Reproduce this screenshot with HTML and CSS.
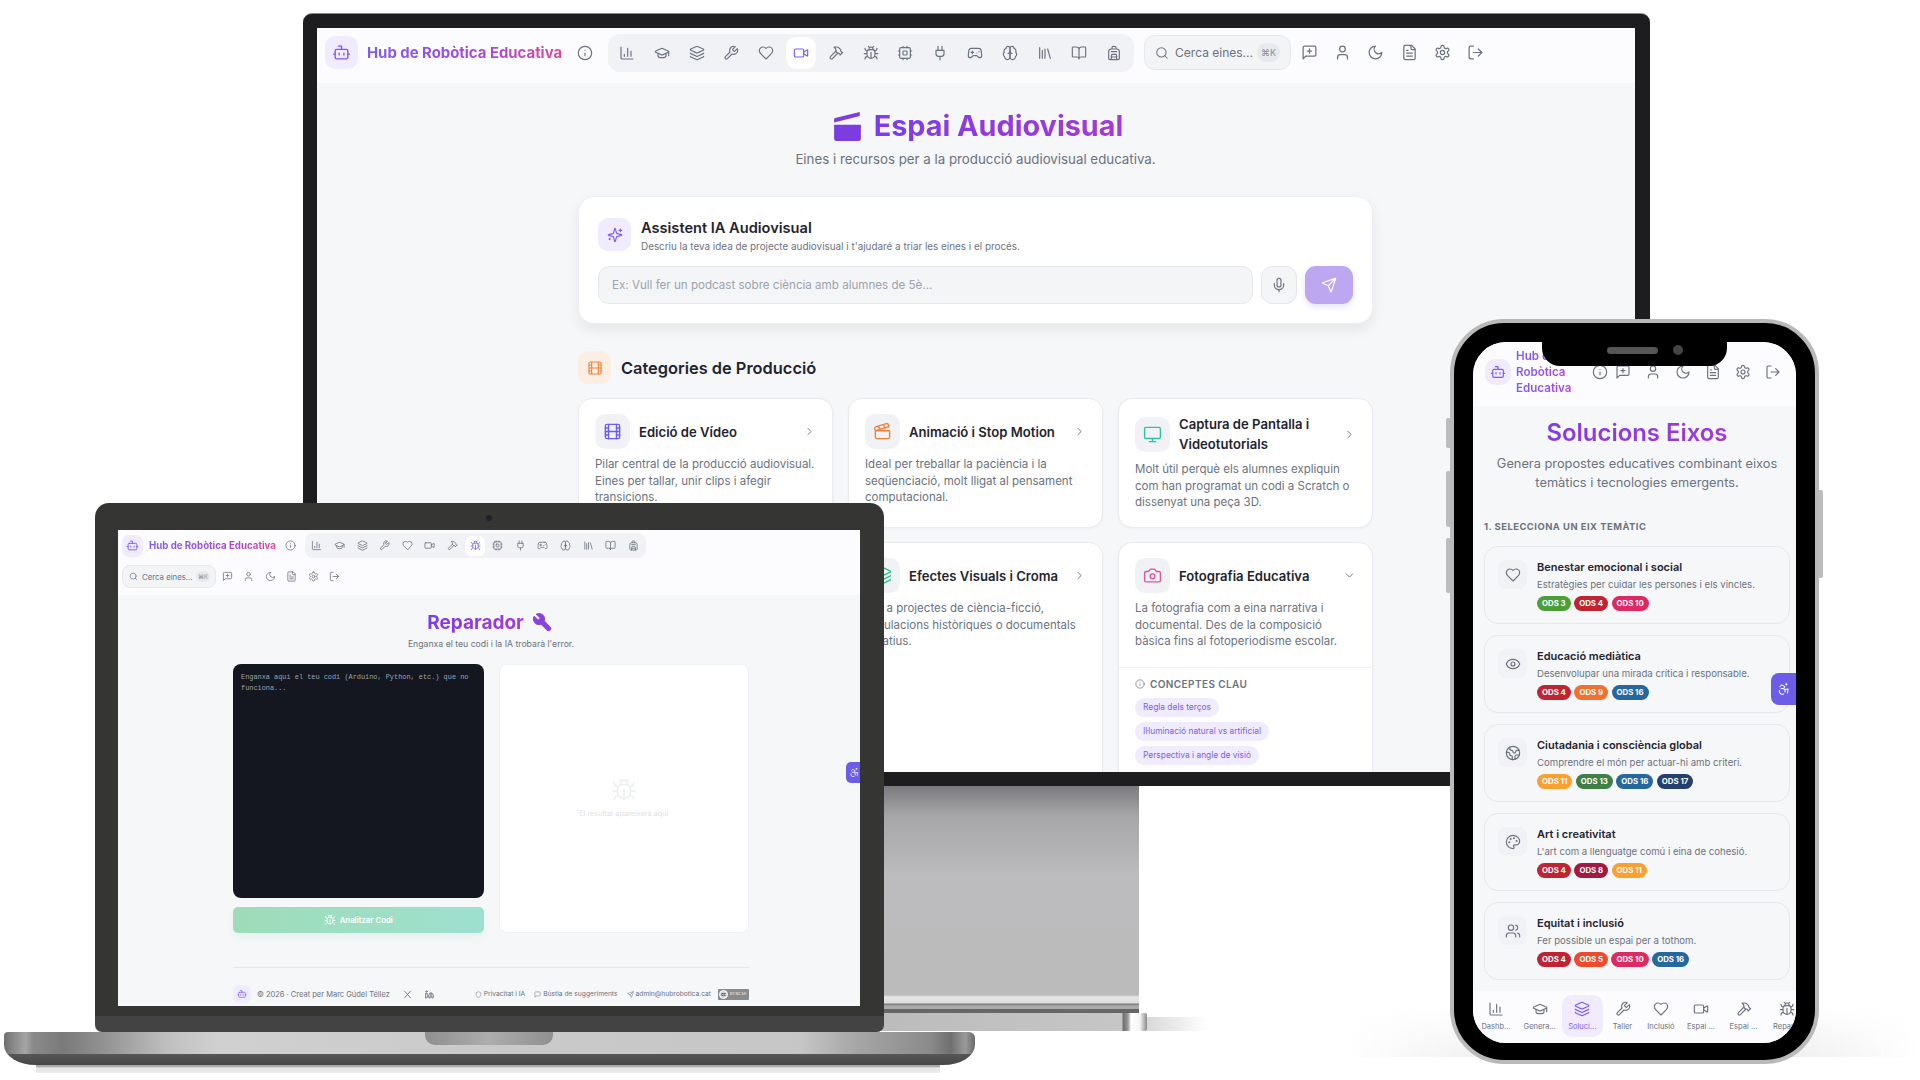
FILE: index.html
```html
<!DOCTYPE html>
<html lang="ca">
<head>
    <meta charset="UTF-8">
    <meta name="viewport" content="width=device-width, initial-scale=1.0">
    <title>Hub de Robòtica Educativa</title>
    <link rel="stylesheet" href="styles.css">
</head>
<body>
    <!-- Icon sprite -->
    <svg class="sprite" xmlns="http://www.w3.org/2000/svg">
        <symbol id="bot" viewBox="0 0 24 24"><path d="M12 8V4H8"/><rect x="4" y="8" width="16" height="12" rx="2"/><path d="M2 14h2M20 14h2M15 13v2M9 13v2"/></symbol>
        <symbol id="info" viewBox="0 0 24 24"><circle cx="12" cy="12" r="10"/><path d="M12 16v-4M12 8h.01"/></symbol>
        <symbol id="chart" viewBox="0 0 24 24"><path d="M3 3v16a2 2 0 0 0 2 2h16M18 17V9M13 17V5M8 17v-3"/></symbol>
        <symbol id="cap" viewBox="0 0 24 24"><path d="M21.42 10.922a1 1 0 0 0-.019-1.838L12.83 5.18a2 2 0 0 0-1.66 0L2.6 9.08a1 1 0 0 0 0 1.832l8.57 3.908a2 2 0 0 0 1.66 0z"/><path d="M22 10v6M6 12.5V16a6 3 0 0 0 12 0v-3.5"/></symbol>
        <symbol id="layers" viewBox="0 0 24 24"><path d="M12.83 2.18a2 2 0 0 0-1.66 0L2.6 6.08a1 1 0 0 0 0 1.83l8.58 3.91a2 2 0 0 0 1.66 0l8.58-3.9a1 1 0 0 0 0-1.83z"/><path d="M2 12a1 1 0 0 0 .58.91l8.6 3.91a2 2 0 0 0 1.65 0l8.58-3.9A1 1 0 0 0 22 12"/><path d="M2 17a1 1 0 0 0 .58.91l8.6 3.91a2 2 0 0 0 1.65 0l8.58-3.9A1 1 0 0 0 22 17"/></symbol>
        <symbol id="wrench" viewBox="0 0 24 24"><path d="M14.7 6.3a1 1 0 0 0 0 1.4l1.6 1.6a1 1 0 0 0 1.4 0l3.77-3.77a6 6 0 0 1-7.94 7.94l-6.91 6.91a2.12 2.12 0 0 1-3-3l6.91-6.91a6 6 0 0 1 7.94-7.94l-3.76 3.76z"/></symbol>
        <symbol id="heart" viewBox="0 0 24 24"><path d="M19 14c1.49-1.46 3-3.21 3-5.5A5.5 5.5 0 0 0 16.5 3c-1.76 0-3 .5-4.5 2-1.5-1.5-2.74-2-4.5-2A5.5 5.5 0 0 0 2 8.5c0 2.3 1.5 4.05 3 5.5l7 7Z"/></symbol>
        <symbol id="video" viewBox="0 0 24 24"><path d="m16 13 5.223 3.482a.5.5 0 0 0 .777-.416V7.87a.5.5 0 0 0-.752-.432L16 10.5"/><rect x="2" y="6" width="14" height="12" rx="2"/></symbol>
        <symbol id="hammer" viewBox="0 0 24 24"><path d="m15 12-8.373 8.373a1 1 0 1 1-3-3L12 9M18 15l4-4"/><path d="m21.5 11.5-1.914-1.914A2 2 0 0 1 19 8.172V7l-2.26-2.26a6 6 0 0 0-4.202-1.756L9 2.96l.92.82A6.18 6.18 0 0 1 12 8.4V10l2 2h1.172a2 2 0 0 1 1.414.586L18.5 14.5"/></symbol>
        <symbol id="bug" viewBox="0 0 24 24"><path d="m8 2 1.88 1.88M14.12 3.88 16 2M9 7.13v-1a3.003 3.003 0 1 1 6 0v1"/><path d="M12 20c-3.3 0-6-2.7-6-6v-3a4 4 0 0 1 4-4h4a4 4 0 0 1 4 4v3c0 3.3-2.7 6-6 6M12 20v-9M6.53 9C4.6 8.8 3 7.1 3 5M6 13H2M3 21c0-2.1 1.7-3.9 3.8-4M20.97 5c0 2.1-1.6 3.8-3.5 4M22 13h-4M17.2 17c2.1.1 3.8 1.9 3.8 4"/></symbol>
        <symbol id="cpu" viewBox="0 0 24 24"><rect x="4" y="4" width="16" height="16" rx="2"/><rect x="9" y="9" width="6" height="6" rx="1"/><path d="M15 2v2M15 20v2M2 15h2M2 9h2M20 15h2M20 9h2M9 2v2M9 20v2"/></symbol>
        <symbol id="plug" viewBox="0 0 24 24"><path d="M12 22v-5M9 8V2M15 8V2M18 8v5a4 4 0 0 1-4 4h-4a4 4 0 0 1-4-4V8Z"/></symbol>
        <symbol id="gamepad" viewBox="0 0 24 24"><path d="M6 11h4M8 9v4M15 12h.01M18 10h.01"/><path d="M17.32 5H6.68a4 4 0 0 0-3.978 3.59c-.006.052-.01.101-.017.152C2.604 9.416 2 14.456 2 16a3 3 0 0 0 3 3c1 0 1.5-.5 2-1l1.414-1.414A2 2 0 0 1 9.828 16h4.344a2 2 0 0 1 1.414.586L17 18c.5.5 1 1 2 1a3 3 0 0 0 3-3c0-1.545-.604-6.584-.685-7.258-.007-.05-.011-.1-.017-.151A4 4 0 0 0 17.32 5z"/></symbol>
        <symbol id="brain" viewBox="0 0 24 24"><path d="M12 5a3 3 0 1 0-5.997.125 4 4 0 0 0-2.526 5.77 4 4 0 0 0 .556 6.588A4 4 0 1 0 12 18Z"/><path d="M12 5a3 3 0 1 1 5.997.125 4 4 0 0 1 2.526 5.77 4 4 0 0 1-.556 6.588A4 4 0 1 1 12 18Z"/><path d="M15 13a4.5 4.5 0 0 1-3-4 4.5 4.5 0 0 1-3 4"/></symbol>
        <symbol id="library" viewBox="0 0 24 24"><path d="m16 6 4 14M12 6v14M8 8v12M4 4v16"/></symbol>
        <symbol id="book" viewBox="0 0 24 24"><path d="M12 7v14M3 18a1 1 0 0 1-1-1V4a1 1 0 0 1 1-1h5a4 4 0 0 1 4 4 4 4 0 0 1 4-4h5a1 1 0 0 1 1 1v13a1 1 0 0 1-1 1h-6a3 3 0 0 0-3 3 3 3 0 0 0-3-3z"/></symbol>
        <symbol id="backpack" viewBox="0 0 24 24"><path d="M4 10a4 4 0 0 1 4-4h8a4 4 0 0 1 4 4v10a2 2 0 0 1-2 2H6a2 2 0 0 1-2-2zM8 10h8M8 18h8M8 22v-6a2 2 0 0 1 2-2h4a2 2 0 0 1 2 2v6M9 6V4a2 2 0 0 1 2-2h2a2 2 0 0 1 2 2v2"/></symbol>
        <symbol id="search" viewBox="0 0 24 24"><circle cx="11" cy="11" r="8"/><path d="m21 21-4.3-4.3"/></symbol>
        <symbol id="feedback" viewBox="0 0 24 24"><path d="M21 15a2 2 0 0 1-2 2H7l-4 4V5a2 2 0 0 1 2-2h14a2 2 0 0 1 2 2zM12 7v6M9 10h6"/></symbol>
        <symbol id="user" viewBox="0 0 24 24"><path d="M19 21v-2a4 4 0 0 0-4-4H9a4 4 0 0 0-4 4v2"/><circle cx="12" cy="7" r="4"/></symbol>
        <symbol id="moon" viewBox="0 0 24 24"><path d="M12 3a6 6 0 0 0 9 9 9 9 0 1 1-9-9Z"/></symbol>
        <symbol id="file" viewBox="0 0 24 24"><path d="M15 2H6a2 2 0 0 0-2 2v16a2 2 0 0 0 2 2h12a2 2 0 0 0 2-2V7ZM14 2v4a2 2 0 0 0 2 2h4M10 9H8M16 13H8M16 17H8"/></symbol>
        <symbol id="gear" viewBox="0 0 24 24"><circle cx="12" cy="12" r="3"/><path d="M12.22 2h-.44a2 2 0 0 0-2 2v.18a2 2 0 0 1-1 1.73l-.43.25a2 2 0 0 1-2 0l-.15-.08a2 2 0 0 0-2.73.73l-.22.38a2 2 0 0 0 .73 2.73l.15.1a2 2 0 0 1 1 1.72v.51a2 2 0 0 1-1 1.74l-.15.09a2 2 0 0 0-.73 2.73l.22.38a2 2 0 0 0 2.73.73l.15-.08a2 2 0 0 1 2 0l.43.25a2 2 0 0 1 1 1.73V20a2 2 0 0 0 2 2h.44a2 2 0 0 0 2-2v-.18a2 2 0 0 1 1-1.73l.43-.25a2 2 0 0 1 2 0l.15.08a2 2 0 0 0 2.73-.73l.22-.39a2 2 0 0 0-.73-2.73l-.15-.08a2 2 0 0 1-1-1.74v-.5a2 2 0 0 1 1-1.74l.15-.09a2 2 0 0 0 .73-2.73l-.22-.38a2 2 0 0 0-2.73-.73l-.15.08a2 2 0 0 1-2 0l-.43-.25a2 2 0 0 1-1-1.73V4a2 2 0 0 0-2-2z"/></symbol>
        <symbol id="logout" viewBox="0 0 24 24"><path d="M9 21H5a2 2 0 0 1-2-2V5a2 2 0 0 1 2-2h4M16 17l5-5-5-5M21 12H9"/></symbol>
        <symbol id="sparkles" viewBox="0 0 24 24"><path d="M9.937 15.5A2 2 0 0 0 8.5 14.063l-6.135-1.582a.5.5 0 0 1 0-.962L8.5 9.936A2 2 0 0 0 9.937 8.5l1.582-6.135a.5.5 0 0 1 .963 0L14.063 8.5A2 2 0 0 0 15.5 9.937l6.135 1.581a.5.5 0 0 1 0 .964L15.5 14.063a2 2 0 0 0-1.437 1.437l-1.582 6.135a.5.5 0 0 1-.963 0zM20 3v4M22 5h-4M4 17v2M5 18H3"/></symbol>
        <symbol id="mic" viewBox="0 0 24 24"><path d="M12 2a3 3 0 0 0-3 3v7a3 3 0 0 0 6 0V5a3 3 0 0 0-3-3ZM19 10v2a7 7 0 0 1-14 0v-2M12 19v3"/></symbol>
        <symbol id="send" viewBox="0 0 24 24"><path d="M14.536 21.686a.5.5 0 0 0 .937-.024l6.5-19a.496.496 0 0 0-.635-.635l-19 6.5a.5.5 0 0 0-.024.937l7.93 3.18a2 2 0 0 1 1.112 1.11zM21.854 2.147l-10.94 10.939"/></symbol>
        <symbol id="film" viewBox="0 0 24 24"><rect x="3" y="3" width="18" height="18" rx="2"/><path d="M7 3v18M3 7.5h4M3 12h18M3 16.5h4M17 3v18M17 7.5h4M17 16.5h4"/></symbol>
        <symbol id="clapper" viewBox="0 0 24 24"><path d="M20.2 6 3 11l-.9-2.4c-.3-1.1.3-2.2 1.3-2.5l13.5-4c1.1-.3 2.2.3 2.5 1.3ZM6.2 5.3l3.1 3.9M12.4 3.4l3.1 4M3 11h18v8a2 2 0 0 1-2 2H5a2 2 0 0 1-2-2Z"/></symbol>
        <symbol id="monitor" viewBox="0 0 24 24"><rect x="2" y="3" width="20" height="14" rx="2"/><path d="M8 21h8M12 17v4"/></symbol>
        <symbol id="camera" viewBox="0 0 24 24"><path d="M14.5 4h-5L7 7H4a2 2 0 0 0-2 2v9a2 2 0 0 0 2 2h16a2 2 0 0 0 2-2V9a2 2 0 0 0-2-2h-3l-2.5-3z"/><circle cx="12" cy="13" r="3"/></symbol>
        <symbol id="right" viewBox="0 0 24 24"><path d="m9 18 6-6-6-6"/></symbol>
        <symbol id="down" viewBox="0 0 24 24"><path d="m6 9 6 6 6-6"/></symbol>
        <symbol id="eye" viewBox="0 0 24 24"><path d="M2.062 12.348a1 1 0 0 1 0-.696 10.75 10.75 0 0 1 19.876 0 1 1 0 0 1 0 .696 10.75 10.75 0 0 1-19.876 0"/><circle cx="12" cy="12" r="3"/></symbol>
        <symbol id="earth" viewBox="0 0 24 24"><path d="M21.54 15H17a2 2 0 0 0-2 2v4.54M7 3.34V5a3 3 0 0 0 3 3 2 2 0 0 1 2 2c0 1.1.9 2 2 2a2 2 0 0 0 2-2c0-1.1.9-2 2-2h3.17M11 21.95V18a2 2 0 0 0-2-2 2 2 0 0 1-2-2v-1a2 2 0 0 0-2-2H2.05"/><circle cx="12" cy="12" r="10"/></symbol>
        <symbol id="palette" viewBox="0 0 24 24"><path d="M12 2C6.5 2 2 6.5 2 12s4.5 10 10 10c.926 0 1.648-.746 1.648-1.688 0-.437-.18-.835-.437-1.125-.29-.289-.438-.652-.438-1.125a1.64 1.64 0 0 1 1.668-1.668h1.996c3.051 0 5.555-2.503 5.555-5.554C21.965 6.012 17.461 2 12 2z"/><path d="M13.5 6.5h.01M17.5 10.5h.01M8.5 7.5h.01M6.5 12.5h.01" stroke-width="3"/></symbol>
        <symbol id="users" viewBox="0 0 24 24"><path d="M16 21v-2a4 4 0 0 0-4-4H6a4 4 0 0 0-4 4v2"/><circle cx="9" cy="7" r="4"/><path d="M22 21v-2a4 4 0 0 0-3-3.87M16 3.13a4 4 0 0 1 0 7.75"/></symbol>
        <symbol id="access" viewBox="0 0 24 24"><circle cx="16" cy="4" r="1"/><path d="m18 19 1-7-6 1M5 8l3-3 5.5 3-2.36 3.5M4.24 14.5a5 5 0 0 0 6.88 6M13.76 17.5a5 5 0 0 0-6.88-6"/></symbol>
        <symbol id="shield" viewBox="0 0 24 24"><path d="M20 13c0 5-3.5 7.5-7.66 8.95a1 1 0 0 1-.67-.01C7.5 20.5 4 18 4 13V6a1 1 0 0 1 1-1c2 0 4.5-1.2 6.24-2.72a1.17 1.17 0 0 1 1.52 0C14.51 3.81 17 5 19 5a1 1 0 0 1 1 1z"/></symbol>
        <symbol id="message" viewBox="0 0 24 24"><path d="M21 15a2 2 0 0 1-2 2H7l-4 4V5a2 2 0 0 1 2-2h14a2 2 0 0 1 2 2z"/></symbol>
        <symbol id="x-logo" viewBox="0 0 24 24"><path d="M4 3l16 18M20 3 4 21"/></symbol>
        <symbol id="linkedin" viewBox="0 0 24 24"><path d="M16 8a6 6 0 0 1 6 6v7h-4v-7a2 2 0 0 0-4 0v7h-4v-7a6 6 0 0 1 6-6zM2 9h4v12H2z"/><circle cx="4" cy="4" r="2"/></symbol>
    </svg>

    <!-- Desktop monitor -->
    <div class="stand"></div>
    <div class="foot"></div>
    <div class="monitor">
        <div class="monitor-screen">
            <header class="top-bar">
                <span class="logo-box"><svg class="ic"><use href="#bot"/></svg></span>
                <span class="brand">Hub de Robòtica Educativa</span>
                <svg class="ic info-ic"><use href="#info"/></svg>
                <nav class="tool-nav">
                    <span class="tool"><svg class="ic"><use href="#chart"/></svg></span>
                    <span class="tool"><svg class="ic"><use href="#cap"/></svg></span>
                    <span class="tool"><svg class="ic"><use href="#layers"/></svg></span>
                    <span class="tool"><svg class="ic"><use href="#wrench"/></svg></span>
                    <span class="tool"><svg class="ic"><use href="#heart"/></svg></span>
                    <span class="tool active"><svg class="ic"><use href="#video"/></svg></span>
                    <span class="tool"><svg class="ic"><use href="#hammer"/></svg></span>
                    <span class="tool"><svg class="ic"><use href="#bug"/></svg></span>
                    <span class="tool"><svg class="ic"><use href="#cpu"/></svg></span>
                    <span class="tool"><svg class="ic"><use href="#plug"/></svg></span>
                    <span class="tool"><svg class="ic"><use href="#gamepad"/></svg></span>
                    <span class="tool"><svg class="ic"><use href="#brain"/></svg></span>
                    <span class="tool"><svg class="ic"><use href="#library"/></svg></span>
                    <span class="tool"><svg class="ic"><use href="#book"/></svg></span>
                    <span class="tool"><svg class="ic"><use href="#backpack"/></svg></span>
                </nav>
                <div class="search-box">
                    <svg class="ic"><use href="#search"/></svg>
                    <span class="search-text">Cerca eines...</span>
                    <span class="kbd">⌘K</span>
                </div>
                <div class="user-icons">
                    <svg class="ic"><use href="#feedback"/></svg>
                    <svg class="ic"><use href="#user"/></svg>
                    <svg class="ic"><use href="#moon"/></svg>
                    <svg class="ic"><use href="#file"/></svg>
                    <svg class="ic"><use href="#gear"/></svg>
                    <svg class="ic"><use href="#logout"/></svg>
                </div>
            </header>

            <main class="av-page">
                <div class="page-title">
                    <svg class="clapper-solid" viewBox="0 0 24 26"><path d="M0 11.5h24V24a2 2 0 0 1-2 2H2a2 2 0 0 1-2-2zM0 9.5V6.6q0-1 1-1.3L23 0v3.6z"/></svg>
                    <h1>Espai Audiovisual</h1>
                </div>
                <p class="page-sub">Eines i recursos per a la producció audiovisual educativa.</p>

                <section class="ai-card">
                    <div class="ai-head">
                        <span class="ai-icon"><svg class="ic"><use href="#sparkles"/></svg></span>
                        <div>
                            <h2>Assistent IA Audiovisual</h2>
                            <p>Descriu la teva idea de projecte audiovisual i t'ajudaré a triar les eines i el procés.</p>
                        </div>
                    </div>
                    <div class="ai-input-row">
                        <div class="ai-input">Ex: Vull fer un podcast sobre ciència amb alumnes de 5è...</div>
                        <span class="mic-btn"><svg class="ic"><use href="#mic"/></svg></span>
                        <span class="send-btn"><svg class="ic"><use href="#send"/></svg></span>
                    </div>
                </section>

                <div class="section-head">
                    <span class="section-icon"><svg class="ic"><use href="#film"/></svg></span>
                    <h2>Categories de Producció</h2>
                </div>

                <div class="cat-grid">
                    <article class="cat-card">
                        <div class="cat-head">
                            <span class="cat-icon violet"><svg class="ic"><use href="#film"/></svg></span>
                            <h3>Edició de Vídeo</h3>
                            <svg class="ic chev"><use href="#right"/></svg>
                        </div>
                        <p>Pilar central de la producció audiovisual. Eines per tallar, unir clips i afegir transicions.</p>
                    </article>
                    <article class="cat-card">
                        <div class="cat-head">
                            <span class="cat-icon orange"><svg class="ic"><use href="#clapper"/></svg></span>
                            <h3>Animació i Stop Motion</h3>
                            <svg class="ic chev"><use href="#right"/></svg>
                        </div>
                        <p>Ideal per treballar la paciència i la seqüenciació, molt lligat al pensament computacional.</p>
                    </article>
                    <article class="cat-card">
                        <div class="cat-head">
                            <span class="cat-icon teal"><svg class="ic"><use href="#monitor"/></svg></span>
                            <h3>Captura de Pantalla i Videotutorials</h3>
                            <svg class="ic chev"><use href="#right"/></svg>
                        </div>
                        <p>Molt útil perquè els alumnes expliquin com han programat un codi a Scratch o dissenyat una peça 3D.</p>
                    </article>
                    <article class="cat-card"></article>
                    <article class="cat-card">
                        <div class="cat-head">
                            <span class="cat-icon green"><svg class="ic"><use href="#layers"/></svg></span>
                            <h3>Efectes Visuals i Croma</h3>
                            <svg class="ic chev"><use href="#right"/></svg>
                        </div>
                        <p>Per a projectes de ciència-ficció, simulacions històriques o documentals creatius.</p>
                    </article>
                    <article class="cat-card open">
                        <div class="cat-head">
                            <span class="cat-icon pink"><svg class="ic"><use href="#camera"/></svg></span>
                            <h3>Fotografia Educativa</h3>
                            <svg class="ic chev"><use href="#down"/></svg>
                        </div>
                        <p>La fotografia com a eina narrativa i documental. Des de la composició bàsica fins al fotoperiodisme escolar.</p>
                        <div class="concepts">
                            <h4><svg class="ic"><use href="#info"/></svg>CONCEPTES CLAU</h4>
                            <span class="chip">Regla dels terços</span>
                            <span class="chip">Il·luminació natural vs artificial</span>
                            <span class="chip">Perspectiva i angle de visió</span>
                        </div>
                    </article>
                </div>
            </main>
        </div>
    </div>

    <!-- Laptop -->
    <div class="laptop">
        <span class="webcam"></span>
        <div class="laptop-screen">
            <header class="lap-bar">
                <div class="lap-row">
                    <span class="lap-logo"><svg class="ic"><use href="#bot"/></svg></span>
                    <span class="brand lap-brand">Hub de Robòtica Educativa</span>
                    <svg class="ic lap-info"><use href="#info"/></svg>
                    <nav class="lap-nav">
                        <span class="lap-tool"><svg class="ic"><use href="#chart"/></svg></span>
                        <span class="lap-tool"><svg class="ic"><use href="#cap"/></svg></span>
                        <span class="lap-tool"><svg class="ic"><use href="#layers"/></svg></span>
                        <span class="lap-tool"><svg class="ic"><use href="#wrench"/></svg></span>
                        <span class="lap-tool"><svg class="ic"><use href="#heart"/></svg></span>
                        <span class="lap-tool"><svg class="ic"><use href="#video"/></svg></span>
                        <span class="lap-tool"><svg class="ic"><use href="#hammer"/></svg></span>
                        <span class="lap-tool active"><svg class="ic"><use href="#bug"/></svg></span>
                        <span class="lap-tool"><svg class="ic"><use href="#cpu"/></svg></span>
                        <span class="lap-tool"><svg class="ic"><use href="#plug"/></svg></span>
                        <span class="lap-tool"><svg class="ic"><use href="#gamepad"/></svg></span>
                        <span class="lap-tool"><svg class="ic"><use href="#brain"/></svg></span>
                        <span class="lap-tool"><svg class="ic"><use href="#library"/></svg></span>
                        <span class="lap-tool"><svg class="ic"><use href="#book"/></svg></span>
                        <span class="lap-tool"><svg class="ic"><use href="#backpack"/></svg></span>
                    </nav>
                </div>
                <div class="lap-row">
                    <div class="lap-search">
                        <svg class="ic"><use href="#search"/></svg>
                        <span class="lap-search-text">Cerca eines...</span>
                        <span class="lap-kbd">⌘K</span>
                    </div>
                    <div class="lap-icons">
                        <svg class="ic"><use href="#feedback"/></svg>
                        <svg class="ic"><use href="#user"/></svg>
                        <svg class="ic"><use href="#moon"/></svg>
                        <svg class="ic"><use href="#file"/></svg>
                        <svg class="ic"><use href="#gear"/></svg>
                        <svg class="ic"><use href="#logout"/></svg>
                    </div>
                </div>
            </header>

            <main class="repair-page">
                <div class="repair-title">
                    <h1>Reparador</h1>
                    <svg class="ic wrench-solid"><use href="#wrench"/></svg>
                </div>
                <p class="repair-sub">Enganxa el teu codi i la IA trobarà l'error.</p>
                <div class="repair-grid">
                    <div class="repair-left">
                        <div class="code-box">Enganxa aquí el teu codi (Arduino, Python, etc.) que no funciona...</div>
                        <div class="analyse-btn"><svg class="ic"><use href="#bug"/></svg>Analitzar Codi</div>
                    </div>
                    <div class="result-box">
                        <svg class="ic"><use href="#bug"/></svg>
                        <span>El resultat apareixerà aquí</span>
                    </div>
                </div>
                <footer class="lap-footer">
                    <span class="foot-logo"><svg class="ic"><use href="#bot"/></svg></span>
                    <span class="foot-copy">© 2026 · Creat per Marc Gúdel Téllez</span>
                    <svg class="ic foot-social"><use href="#x-logo"/></svg>
                    <svg class="ic foot-social"><use href="#linkedin"/></svg>
                    <span class="foot-link first"><svg class="ic"><use href="#shield"/></svg>Privacitat i IA</span>
                    <span class="foot-link"><svg class="ic"><use href="#message"/></svg>Bústia de suggeriments</span>
                    <span class="foot-link"><svg class="ic"><use href="#send"/></svg>admin@hubrobotica.cat</span>
                    <span class="cc-badge"><span class="cc-mark">cc</span>BY NC SA</span>
                </footer>
            </main>
            <span class="side-btn lap-side"><svg class="ic"><use href="#access"/></svg></span>
        </div>
    </div>
    <div class="laptop-shadow"></div>
    <div class="laptop-base"><span class="base-notch"></span></div>

    <!-- Phone -->
    <div class="floor-shadow"></div>
    <span class="phone-key key-a"></span>
    <span class="phone-key key-b"></span>
    <span class="phone-key key-c"></span>
    <span class="phone-key key-d"></span>
    <div class="phone">
        <div class="phone-screen">
            <header class="phone-bar">
                <span class="phone-logo"><svg class="ic"><use href="#bot"/></svg></span>
                <span class="brand phone-brand">Hub de Robòtica Educativa</span>
                <div class="phone-icons">
                    <svg class="ic phone-info"><use href="#info"/></svg>
                    <svg class="ic"><use href="#feedback"/></svg>
                    <svg class="ic"><use href="#user"/></svg>
                    <svg class="ic"><use href="#moon"/></svg>
                    <svg class="ic"><use href="#file"/></svg>
                    <svg class="ic"><use href="#gear"/></svg>
                    <svg class="ic"><use href="#logout"/></svg>
                </div>
            </header>

            <main class="axis-page">
                <h1>Solucions Eixos</h1>
                <p class="axis-sub">Genera propostes educatives combinant eixos temàtics i tecnologies emergents.</p>
                <h2 class="axis-label">1. SELECCIONA UN EIX TEMÀTIC</h2>

                <article class="axis-card">
                    <span class="axis-icon"><svg class="ic"><use href="#heart"/></svg></span>
                    <div>
                        <h3>Benestar emocional i social</h3>
                        <p>Estratègies per cuidar les persones i els vincles.</p>
                        <div class="badges"><span class="ods ods3">ODS 3</span><span class="ods ods4">ODS 4</span><span class="ods ods10">ODS 10</span></div>
                    </div>
                </article>
                <article class="axis-card">
                    <span class="axis-icon"><svg class="ic"><use href="#eye"/></svg></span>
                    <div>
                        <h3>Educació mediàtica</h3>
                        <p>Desenvolupar una mirada crítica i responsable.</p>
                        <div class="badges"><span class="ods ods4">ODS 4</span><span class="ods ods9">ODS 9</span><span class="ods ods16">ODS 16</span></div>
                    </div>
                </article>
                <article class="axis-card">
                    <span class="axis-icon"><svg class="ic"><use href="#earth"/></svg></span>
                    <div>
                        <h3>Ciutadania i consciència global</h3>
                        <p>Comprendre el món per actuar-hi amb criteri.</p>
                        <div class="badges"><span class="ods ods11">ODS 11</span><span class="ods ods13">ODS 13</span><span class="ods ods16">ODS 16</span><span class="ods ods17">ODS 17</span></div>
                    </div>
                </article>
                <article class="axis-card">
                    <span class="axis-icon"><svg class="ic"><use href="#palette"/></svg></span>
                    <div>
                        <h3>Art i creativitat</h3>
                        <p>L'art com a llenguatge comú i eina de cohesió.</p>
                        <div class="badges"><span class="ods ods4">ODS 4</span><span class="ods ods8">ODS 8</span><span class="ods ods11">ODS 11</span></div>
                    </div>
                </article>
                <article class="axis-card">
                    <span class="axis-icon"><svg class="ic"><use href="#users"/></svg></span>
                    <div>
                        <h3>Equitat i inclusió</h3>
                        <p>Fer possible un espai per a tothom.</p>
                        <div class="badges"><span class="ods ods4">ODS 4</span><span class="ods ods5">ODS 5</span><span class="ods ods10">ODS 10</span><span class="ods ods16">ODS 16</span></div>
                    </div>
                </article>
            </main>

            <nav class="phone-nav">
                <span class="phone-tab"><svg class="ic"><use href="#chart"/></svg>Dashb...</span>
                <span class="phone-tab"><svg class="ic"><use href="#cap"/></svg>Genera...</span>
                <span class="phone-tab active"><svg class="ic"><use href="#layers"/></svg>Soluci...</span>
                <span class="phone-tab"><svg class="ic"><use href="#wrench"/></svg>Taller</span>
                <span class="phone-tab"><svg class="ic"><use href="#heart"/></svg>Inclusió</span>
                <span class="phone-tab"><svg class="ic"><use href="#video"/></svg>Espai ...</span>
                <span class="phone-tab"><svg class="ic"><use href="#hammer"/></svg>Espai ...</span>
                <span class="phone-tab"><svg class="ic"><use href="#bug"/></svg>Repar...</span>
            </nav>
            <span class="side-btn phone-side"><svg class="ic"><use href="#access"/></svg></span>
        </div>
        <div class="notch"><span class="speaker"></span><span class="lens"></span></div>
    </div>
</body>
</html>
```

FILE: styles.css
```css
/* General Styles */
* {
    box-sizing: border-box;
}

body {
    position: relative;
    width: 1920px;
    height: 1080px;
    margin: 0;
    overflow: hidden;
    background: #fff;
    font-family: Inter, "Noto Sans", sans-serif;
    color: #1f2430;
}

h1, h2, h3, h4, p {
    margin: 0;
}

.sprite {
    display: none;
}

.ic {
    display: block;
    flex: none;
    width: 16px;
    height: 16px;
    fill: none;
    stroke: currentColor;
    stroke-width: 1.75;
    stroke-linecap: round;
    stroke-linejoin: round;
}

.brand {
    background: linear-gradient(90deg, #7c5cf2, #a647d6 60%, #d9489f);
    -webkit-background-clip: text;
    background-clip: text;
    color: transparent;
    font-weight: 700;
}

/* Monitor */
.monitor {
    position: absolute;
    left: 303px;
    top: 13px;
    width: 1347px;
    height: 773px;
    padding: 14px 15px 14px 14px;
    background: #1d1d1f;
    border-top: 1px solid #8a8a8a;
    border-radius: 9px 9px 0 0;
}

.monitor-screen {
    width: 100%;
    height: 100%;
    overflow: hidden;
    background: #f6f7f9;
}

.stand {
    position: absolute;
    left: 800px;
    top: 786px;
    width: 339px;
    height: 227px;
    background: linear-gradient(180deg, #7b7b7f 0, #a6a6a8 30px, #bcbcbe 90px, #bbb 209px, #e6e6e6 211px, #dcdcdc 217px, #777 218px, #aaa 220px, #aaa 223px, #666 223px, #666 227px);
}

.foot {
    position: absolute;
    left: 800px;
    top: 1013px;
    width: 347px;
    height: 18px;
    border-radius: 0 2px 2px 0;
    background: linear-gradient(90deg, #b8b8b8 0, #c6c6c6 322px, #6e6e6e 323px, #999 328px, #fff 331px, #f4f4f4 340px, #8a8a8a 347px);
}

.foot::after {
    content: "";
    position: absolute;
    left: 100%;
    bottom: 0;
    width: 60px;
    height: 14px;
    background: linear-gradient(90deg, #d8d8d8, rgba(255, 255, 255, 0));
}

.top-bar {
    display: flex;
    align-items: center;
    height: 55px;
    padding: 0 0 6px 8px;
    background: #fcfcfe;
}

.logo-box {
    display: flex;
    align-items: center;
    justify-content: center;
    flex: none;
    width: 33px;
    height: 33px;
    border-radius: 10px;
    background: #f0ebfe;
    color: #7c5cf2;
}

.logo-box .ic {
    width: 19px;
    height: 19px;
}

.top-bar .brand {
    margin-left: 9px;
    font-size: 14.9px;
    white-space: nowrap;
}

.info-ic {
    margin-left: 15px;
    color: #6b7280;
}

.tool-nav {
    display: flex;
    align-items: center;
    flex: none;
    gap: 4.8px;
    width: 526px;
    height: 38px;
    margin-left: 15px;
    padding: 0 4px;
    border-radius: 12px;
    background: #f1f2f5;
    color: #6b7280;
}

.tool {
    display: flex;
    align-items: center;
    justify-content: center;
    width: 30px;
    height: 32px;
    border-radius: 10px;
}

.tool.active {
    background: #fff;
    color: #7c5cf2;
}

.search-box {
    display: flex;
    align-items: center;
    flex: none;
    width: 147px;
    height: 35px;
    margin-left: 10px;
    padding: 0 10px;
    border: 1px solid #e6e8ec;
    border-radius: 11px;
    background: #f3f4f6;
    color: #6b7280;
}

.search-box .ic {
    width: 14px;
    height: 14px;
}

.search-text {
    margin-left: 6px;
    font-size: 12px;
    white-space: nowrap;
}

.kbd {
    margin-left: auto;
    padding: 4px 4px;
    border-radius: 9px;
    background: #e8e9ed;
    color: #8b909a;
    font-size: 9px;
}

.user-icons {
    display: flex;
    gap: 16.2px;
    margin-left: 10px;
    color: #6b7280;
}

.user-icons .ic {
    width: 17px;
    height: 17px;
}

/* Audiovisual page */
.av-page {
    width: 795px;
    margin-left: 261px;
    padding-top: 28px;
}

.page-title {
    display: flex;
    align-items: center;
    justify-content: center;
    gap: 13px;
    padding-left: 6px;
    color: #7c3ce0;
}

.clapper-solid {
    width: 27px;
    height: 29px;
    fill: currentColor;
}

.page-title h1 {
    background: linear-gradient(90deg, #7c3ce8, #a63ad0);
    -webkit-background-clip: text;
    background-clip: text;
    color: transparent;
    font-size: 28.8px;
    font-weight: 700;
    line-height: 30px;
}

.page-sub {
    margin-top: 10px;
    color: #6b7280;
    font-size: 13.3px;
    line-height: 17px;
    text-align: center;
}

.ai-card {
    height: 128px;
    margin-top: 28px;
    padding: 21px 19px 0;
    border: 1px solid #eceef1;
    border-radius: 16px;
    background: #fff;
    box-shadow: 0 6px 14px rgba(0, 0, 0, 0.07);
}

.ai-head {
    display: flex;
    gap: 10px;
}

.ai-icon {
    display: flex;
    align-items: center;
    justify-content: center;
    width: 33px;
    height: 33px;
    border-radius: 10px;
    background: #f0ebfe;
    color: #7c5cf2;
}

.ai-head h2 {
    font-size: 14.6px;
    font-weight: 600;
    line-height: 20px;
}

.ai-head p {
    margin-top: 1px;
    color: #6b7280;
    font-size: 9.9px;
    line-height: 14px;
}

.ai-input-row {
    display: flex;
    gap: 8px;
    margin-top: 13px;
}

.ai-input {
    display: flex;
    align-items: center;
    flex: 1;
    height: 38px;
    padding-left: 13px;
    border: 1px solid #e5e7eb;
    border-radius: 11px;
    background: #f4f5f7;
    color: #9ca3af;
    font-size: 11.6px;
}

.mic-btn {
    display: flex;
    align-items: center;
    justify-content: center;
    width: 36px;
    height: 38px;
    border: 1px solid #e5e7eb;
    border-radius: 11px;
    background: #f4f5f7;
    color: #6b7280;
}

.send-btn {
    display: flex;
    align-items: center;
    justify-content: center;
    width: 48px;
    height: 38px;
    border-radius: 11px;
    background: #bca7f0;
    color: #fff;
    box-shadow: 0 3px 6px rgba(124, 92, 242, 0.18);
}

.section-head {
    display: flex;
    align-items: center;
    gap: 10px;
    margin-top: 27px;
}

.section-icon {
    display: flex;
    align-items: center;
    justify-content: center;
    width: 33px;
    height: 33px;
    border-radius: 10px;
    background: #fbeee3;
    color: #f0863c;
}

.section-head h2 {
    font-size: 16.4px;
    font-weight: 600;
}

.cat-grid {
    display: grid;
    grid-template-columns: repeat(3, 255px);
    grid-template-rows: 129.5px 400px;
    gap: 14.5px 15px;
    margin-top: 14px;
}

.cat-card {
    border: 1px solid #e9ebef;
    border-radius: 14px;
    background: #fff;
    box-shadow: 0 1px 3px rgba(0, 0, 0, 0.04);
}

.cat-head {
    display: flex;
    align-items: center;
    gap: 9px;
    padding: 15px 16px 0;
}

.cat-icon {
    display: flex;
    align-items: center;
    justify-content: center;
    flex: none;
    width: 35px;
    height: 35px;
    border-radius: 10px;
    background: #f1f2f5;
}

.cat-icon .ic {
    width: 19px;
    height: 19px;
}

.violet { color: #6d5cf2; }
.orange { color: #f0803c; }
.teal { color: #2fbfa5; }
.green { color: #2fbf85; }
.pink { color: #e0559a; }

.cat-head h3 {
    flex: 1;
    font-size: 13.1px;
    font-weight: 600;
    line-height: 20px;
}

.chev {
    width: 13px;
    height: 13px;
    color: #6b7280;
}

.cat-card > p {
    margin-top: 7px;
    padding: 0 16px;
    color: #6b7280;
    font-size: 11.5px;
    line-height: 16.6px;
}

.concepts {
    margin-top: 17px;
    padding: 9px 16px 0;
    border-top: 1px solid #f0f1f4;
}

.concepts h4 {
    display: flex;
    align-items: center;
    gap: 5px;
    margin-bottom: 7px;
    color: #6b7280;
    font-size: 10px;
    font-weight: 600;
    line-height: 14px;
    letter-spacing: 0.4px;
}

.concepts h4 .ic {
    width: 10px;
    height: 10px;
}

.chip {
    display: block;
    width: fit-content;
    height: 19px;
    margin-bottom: 5px;
    padding: 0 8px;
    border-radius: 10px;
    background: #f0ecfd;
    color: #7c5cf2;
    font-size: 8.4px;
    line-height: 19px;
}

/* Laptop */
.laptop {
    position: absolute;
    left: 95px;
    top: 503px;
    width: 789px;
    height: 529px;
    padding: 27px 24px 0 23px;
    background: linear-gradient(180deg, #353533 513px, #434343 513px);
    border-radius: 14px 14px 7px 7px;
}

.webcam {
    position: absolute;
    left: 391px;
    top: 12px;
    width: 6px;
    height: 6px;
    border-radius: 50%;
    background: #20202a;
}

.laptop-screen {
    position: relative;
    height: 476px;
    overflow: hidden;
    background: #f6f7f9;
}

.lap-bar {
    display: flex;
    flex-direction: column;
    gap: 7px;
    height: 65px;
    padding: 3px 0 0 4px;
    background: #fcfcfe;
}

.lap-row {
    display: flex;
    align-items: center;
}

.lap-logo {
    display: flex;
    align-items: center;
    justify-content: center;
    width: 21px;
    height: 22px;
    border-radius: 7px;
    background: #f0ebfe;
    color: #7c5cf2;
}

.lap-logo .ic {
    width: 13px;
    height: 13px;
}

.lap-brand {
    margin-left: 6px;
    font-size: 9.7px;
    white-space: nowrap;
}

.lap-info {
    width: 11px;
    height: 11px;
    margin-left: 9px;
    color: #6b7280;
}

.lap-nav {
    display: flex;
    align-items: center;
    gap: 2.6px;
    width: 341px;
    height: 25px;
    margin-left: 9px;
    padding: 0 2px;
    border-radius: 8px;
    background: #f1f2f5;
    color: #6b7280;
}

.lap-tool {
    display: flex;
    align-items: center;
    justify-content: center;
    width: 20px;
    height: 20px;
    border-radius: 6px;
}

.lap-tool .ic {
    width: 11px;
    height: 11px;
}

.lap-tool.active {
    background: #fff;
    color: #7c5cf2;
}

.lap-search {
    display: flex;
    align-items: center;
    width: 94px;
    height: 23px;
    padding: 0 5px 0 6px;
    border: 1px solid #e6e8ec;
    border-radius: 8px;
    background: #f3f4f6;
    color: #6b7280;
}

.lap-search .ic {
    width: 9px;
    height: 9px;
}

.lap-search-text {
    margin-left: 4px;
    font-size: 7.8px;
    white-space: nowrap;
}

.lap-kbd {
    margin-left: auto;
    padding: 2px;
    border-radius: 6px;
    background: #e8e9ed;
    color: #8b909a;
    font-size: 6px;
}

.lap-icons {
    display: flex;
    gap: 10.4px;
    margin-left: 6px;
    color: #6b7280;
}

.lap-icons .ic {
    width: 11px;
    height: 11px;
}

/* Reparador page */
.repair-page {
    width: 516px;
    margin-left: 115px;
    padding-top: 14px;
}

.repair-title {
    display: flex;
    align-items: center;
    justify-content: center;
    gap: 8px;
    height: 26px;
    padding-right: 2px;
}

.repair-title h1 {
    background: linear-gradient(90deg, #7c3ce8, #a63ad0);
    -webkit-background-clip: text;
    background-clip: text;
    color: transparent;
    font-size: 19px;
    font-weight: 700;
}

.wrench-solid {
    width: 21px;
    height: 21px;
    color: #8a44dc;
    fill: currentColor;
    transform: scaleX(-1);
}

.repair-sub {
    margin-top: 3px;
    color: #6b7280;
    font-size: 8.7px;
    line-height: 13px;
    text-align: center;
}

.repair-grid {
    display: grid;
    grid-template-columns: 250.5px 250.5px;
    gap: 15px;
    margin-top: 13px;
}

.repair-left {
    display: flex;
    flex-direction: column;
    gap: 9px;
}

.code-box {
    height: 234px;
    padding: 8px 8px;
    border-radius: 8px;
    background: #141720;
    color: #9ca3af;
    font-family: "Liberation Mono", monospace;
    font-size: 6.9px;
    line-height: 10.5px;
}

.analyse-btn {
    display: flex;
    align-items: center;
    justify-content: center;
    gap: 4px;
    height: 26px;
    border-radius: 5px;
    background: linear-gradient(90deg, #9edcb8, #9de0cf);
    color: #fff;
    font-size: 7.8px;
    font-weight: 600;
    box-shadow: 0 5px 8px rgba(120, 210, 170, 0.12);
}

.analyse-btn .ic {
    width: 12px;
    height: 12px;
}

.result-box {
    display: flex;
    flex-direction: column;
    align-items: center;
    gap: 6px;
    padding-top: 112px;
    border: 1px solid #eef0f3;
    border-radius: 8px;
    background: #fff;
    color: #dfe1e5;
    font-size: 7.3px;
}

.result-box .ic {
    width: 26px;
    height: 26px;
    stroke-width: 1.4;
    color: #eceef0;
}

.lap-footer {
    display: flex;
    align-items: center;
    height: 36px;
    margin-top: 34px;
    padding-top: 17px;
    border-top: 1px solid #e5e7eb;
    color: #6b7280;
    font-size: 6.7px;
    white-space: nowrap;
}

.foot-logo {
    display: flex;
    align-items: center;
    justify-content: center;
    width: 18px;
    height: 18px;
    border-radius: 6px;
    background: #f0ebfe;
    color: #7c5cf2;
}

.foot-logo .ic {
    width: 10px;
    height: 10px;
}

.foot-copy {
    margin-left: 6px;
    font-size: 7.5px;
}

.foot-social {
    width: 9px;
    height: 9px;
    margin-left: 13px;
    stroke-width: 2.4;
}

.foot-link {
    display: flex;
    align-items: center;
    gap: 2px;
    margin-left: 9px;
}

.foot-link.first {
    margin-left: auto;
}

.foot-link .ic {
    width: 7px;
    height: 7px;
}

.cc-badge {
    display: flex;
    align-items: center;
    gap: 2px;
    width: 31px;
    height: 11px;
    margin-left: 7px;
    padding-left: 1px;
    border-radius: 1px;
    background: #8b8b8b;
    color: #fff;
    font-size: 3.4px;
    line-height: 11px;
}

.cc-mark {
    width: 9px;
    height: 9px;
    border: 1px solid #fff;
    border-radius: 50%;
    background: #d5d5d5;
    color: #333;
    font-size: 4px;
    font-weight: 700;
    line-height: 7px;
    text-align: center;
}

.side-btn {
    position: absolute;
    display: flex;
    align-items: center;
    background: #6c5ce7;
    color: #fff;
}

.lap-side {
    right: 0;
    top: 232px;
    width: 14px;
    height: 21px;
    padding-left: 3px;
    border-radius: 5px 0 0 5px;
}

.lap-side .ic {
    width: 11px;
    height: 11px;
}

.laptop-base {
    position: absolute;
    left: 4px;
    top: 1032px;
    width: 971px;
    height: 33px;
    border-radius: 4px 6px 32px 32px / 4px 6px 20px 20px;
    background:
        linear-gradient(180deg, #565656, #464646) bottom / 100% 11px no-repeat,
        linear-gradient(90deg, #6e6e6e 0, #8a8a8a 1%, #a5a5a5 2.2%, #8a8a8a 3%, #7a7a7a 6%, #909090 10%, #c0c0c0 17%, #d0d0d0 22%, #cacaca 50%, #c6c6c6 82%, #a5a5a5 88%, #8a8a8a 95.5%, #6f6f6f 97.5%, #9a9a9a 99%, #6a6a6a 100%);
}

.base-notch {
    position: absolute;
    left: 421px;
    top: 0;
    width: 128px;
    height: 13px;
    border-radius: 0 0 10px 10px;
    background: linear-gradient(90deg, #8f8f8f, #adadad 50%, #8f8f8f);
}

.laptop-shadow {
    position: absolute;
    left: 36px;
    top: 1060px;
    width: 904px;
    height: 13px;
    background: linear-gradient(180deg, #a8a8a8 50%, #e4e4e4 60%, #ececec);
    filter: blur(0.6px);
}

/* Phone */
.floor-shadow {
    position: absolute;
    left: 1340px;
    top: 1005px;
    width: 580px;
    height: 52px;
    background: linear-gradient(90deg, rgba(255, 255, 255, 0) 0, #e4e4e4 45%, #e8e8e8 70%, rgba(255, 255, 255, 0) 100%);
    -webkit-mask-image: linear-gradient(180deg, transparent, #000);
    mask-image: linear-gradient(180deg, transparent, #000);
}

.phone-key {
    position: absolute;
    width: 5px;
    background: #bdbdbd;
    border-radius: 2px;
}

.key-a { left: 1446px; top: 418px; height: 30px; }
.key-b { left: 1446px; top: 471px; height: 56px; }
.key-c { left: 1446px; top: 538px; height: 55px; }
.key-d { left: 1818px; top: 490px; height: 88px; }

.phone {
    position: absolute;
    left: 1450px;
    top: 319px;
    width: 369px;
    height: 745px;
    padding: 19px;
    border: 4px solid #b9b9b9;
    border-radius: 54px;
    background: #000;
}

.phone-screen {
    position: relative;
    display: flex;
    flex-direction: column;
    height: 701px;
    overflow: hidden;
    border-radius: 33px;
    background: #f6f7f9;
}

.notch {
    position: absolute;
    left: 88px;
    top: 19px;
    display: flex;
    align-items: center;
    justify-content: center;
    gap: 15px;
    width: 185px;
    height: 24px;
    padding: 0 0 8px 20px;
    border-radius: 0 0 18px 18px;
    background: #000;
}

.speaker {
    width: 51px;
    height: 7px;
    border-radius: 4px;
    background: #565656;
}

.lens {
    width: 10px;
    height: 10px;
    border-radius: 50%;
    background: #444;
}

.phone-bar {
    display: flex;
    align-items: center;
    flex: none;
    height: 64px;
    padding: 0 0 4px 12px;
    background: #fcfcfe;
}

.phone-logo {
    display: flex;
    align-items: center;
    justify-content: center;
    flex: none;
    width: 26px;
    height: 26px;
    border-radius: 10px;
    background: #f0ebfe;
    color: #7c5cf2;
}

.phone-brand {
    flex: none;
    width: 76px;
    margin-left: 5px;
    font-size: 11.6px;
    font-weight: 600;
    line-height: 16px;
}

.phone-icons {
    display: flex;
    gap: 14px;
    color: #6b7280;
}

.phone-info {
    margin-right: -7px;
}

.axis-page {
    flex: 1;
    padding: 12px 6px 0 11px;
    overflow: hidden;
}

.axis-page h1 {
    background: linear-gradient(90deg, #7c3ce8, #a63ad0);
    -webkit-background-clip: text;
    background-clip: text;
    color: transparent;
    font-size: 23.9px;
    font-weight: 600;
    line-height: 30px;
    text-align: center;
}

.axis-sub {
    margin-top: 6px;
    color: #6b7280;
    font-size: 12.8px;
    line-height: 19px;
    text-align: center;
}

.axis-label {
    margin-top: 28px;
    color: #6b7280;
    font-size: 9.4px;
    font-weight: 700;
    line-height: 14px;
    letter-spacing: 0.5px;
}

.axis-card {
    display: flex;
    gap: 10px;
    height: 78px;
    margin-top: 12px;
    padding: 13px;
    border: 1px solid #e5e7eb;
    border-radius: 14px;
}

.axis-card + .axis-card {
    margin-top: 11px;
}

.axis-icon {
    display: flex;
    align-items: center;
    justify-content: center;
    flex: none;
    width: 29px;
    height: 29px;
    border-radius: 8px;
    background: #f1f2f5;
    color: #6b7280;
}

.axis-card h3 {
    font-size: 11px;
    font-weight: 600;
    line-height: 14px;
}

.axis-card p {
    margin-top: 3.5px;
    color: #6b7280;
    font-size: 9.6px;
    line-height: 13px;
}

.badges {
    display: flex;
    gap: 3.5px;
    margin-top: 5.5px;
}

.ods {
    padding: 0 5px;
    border-radius: 8px;
    color: #fff;
    font-size: 7.8px;
    font-weight: 700;
    line-height: 15px;
}

.ods3 { background: #4c9f38; }
.ods4 { background: #bf2432; }
.ods5 { background: #ee4a30; }
.ods8 { background: #a21942; }
.ods9 { background: #f37030; }
.ods10 { background: #dd2a62; }
.ods11 { background: #f9a030; }
.ods13 { background: #3f7e44; }
.ods16 { background: #26689e; }
.ods17 { background: #26406e; }

.phone-nav {
    display: grid;
    flex: none;
    grid-template-columns: 44px 43.5px 41.5px 39px 38px 42px 43px 43px;
    height: 52px;
    padding: 4px 0 0 1px;
    background: #fcfcfe;
}

.phone-tab {
    display: flex;
    flex-direction: column;
    align-items: center;
    gap: 5px;
    height: 42px;
    padding-top: 6px;
    border-radius: 10px;
    color: #6b7280;
    font-size: 7.5px;
    white-space: nowrap;
}

.phone-tab.active {
    background: #f0ebfe;
    color: #7c5cf2;
}

.phone-side {
    right: 0;
    top: 331px;
    justify-content: center;
    width: 25px;
    height: 32px;
    border-radius: 8px 0 0 8px;
}

.phone-side .ic {
    width: 14px;
    height: 14px;
}
```
